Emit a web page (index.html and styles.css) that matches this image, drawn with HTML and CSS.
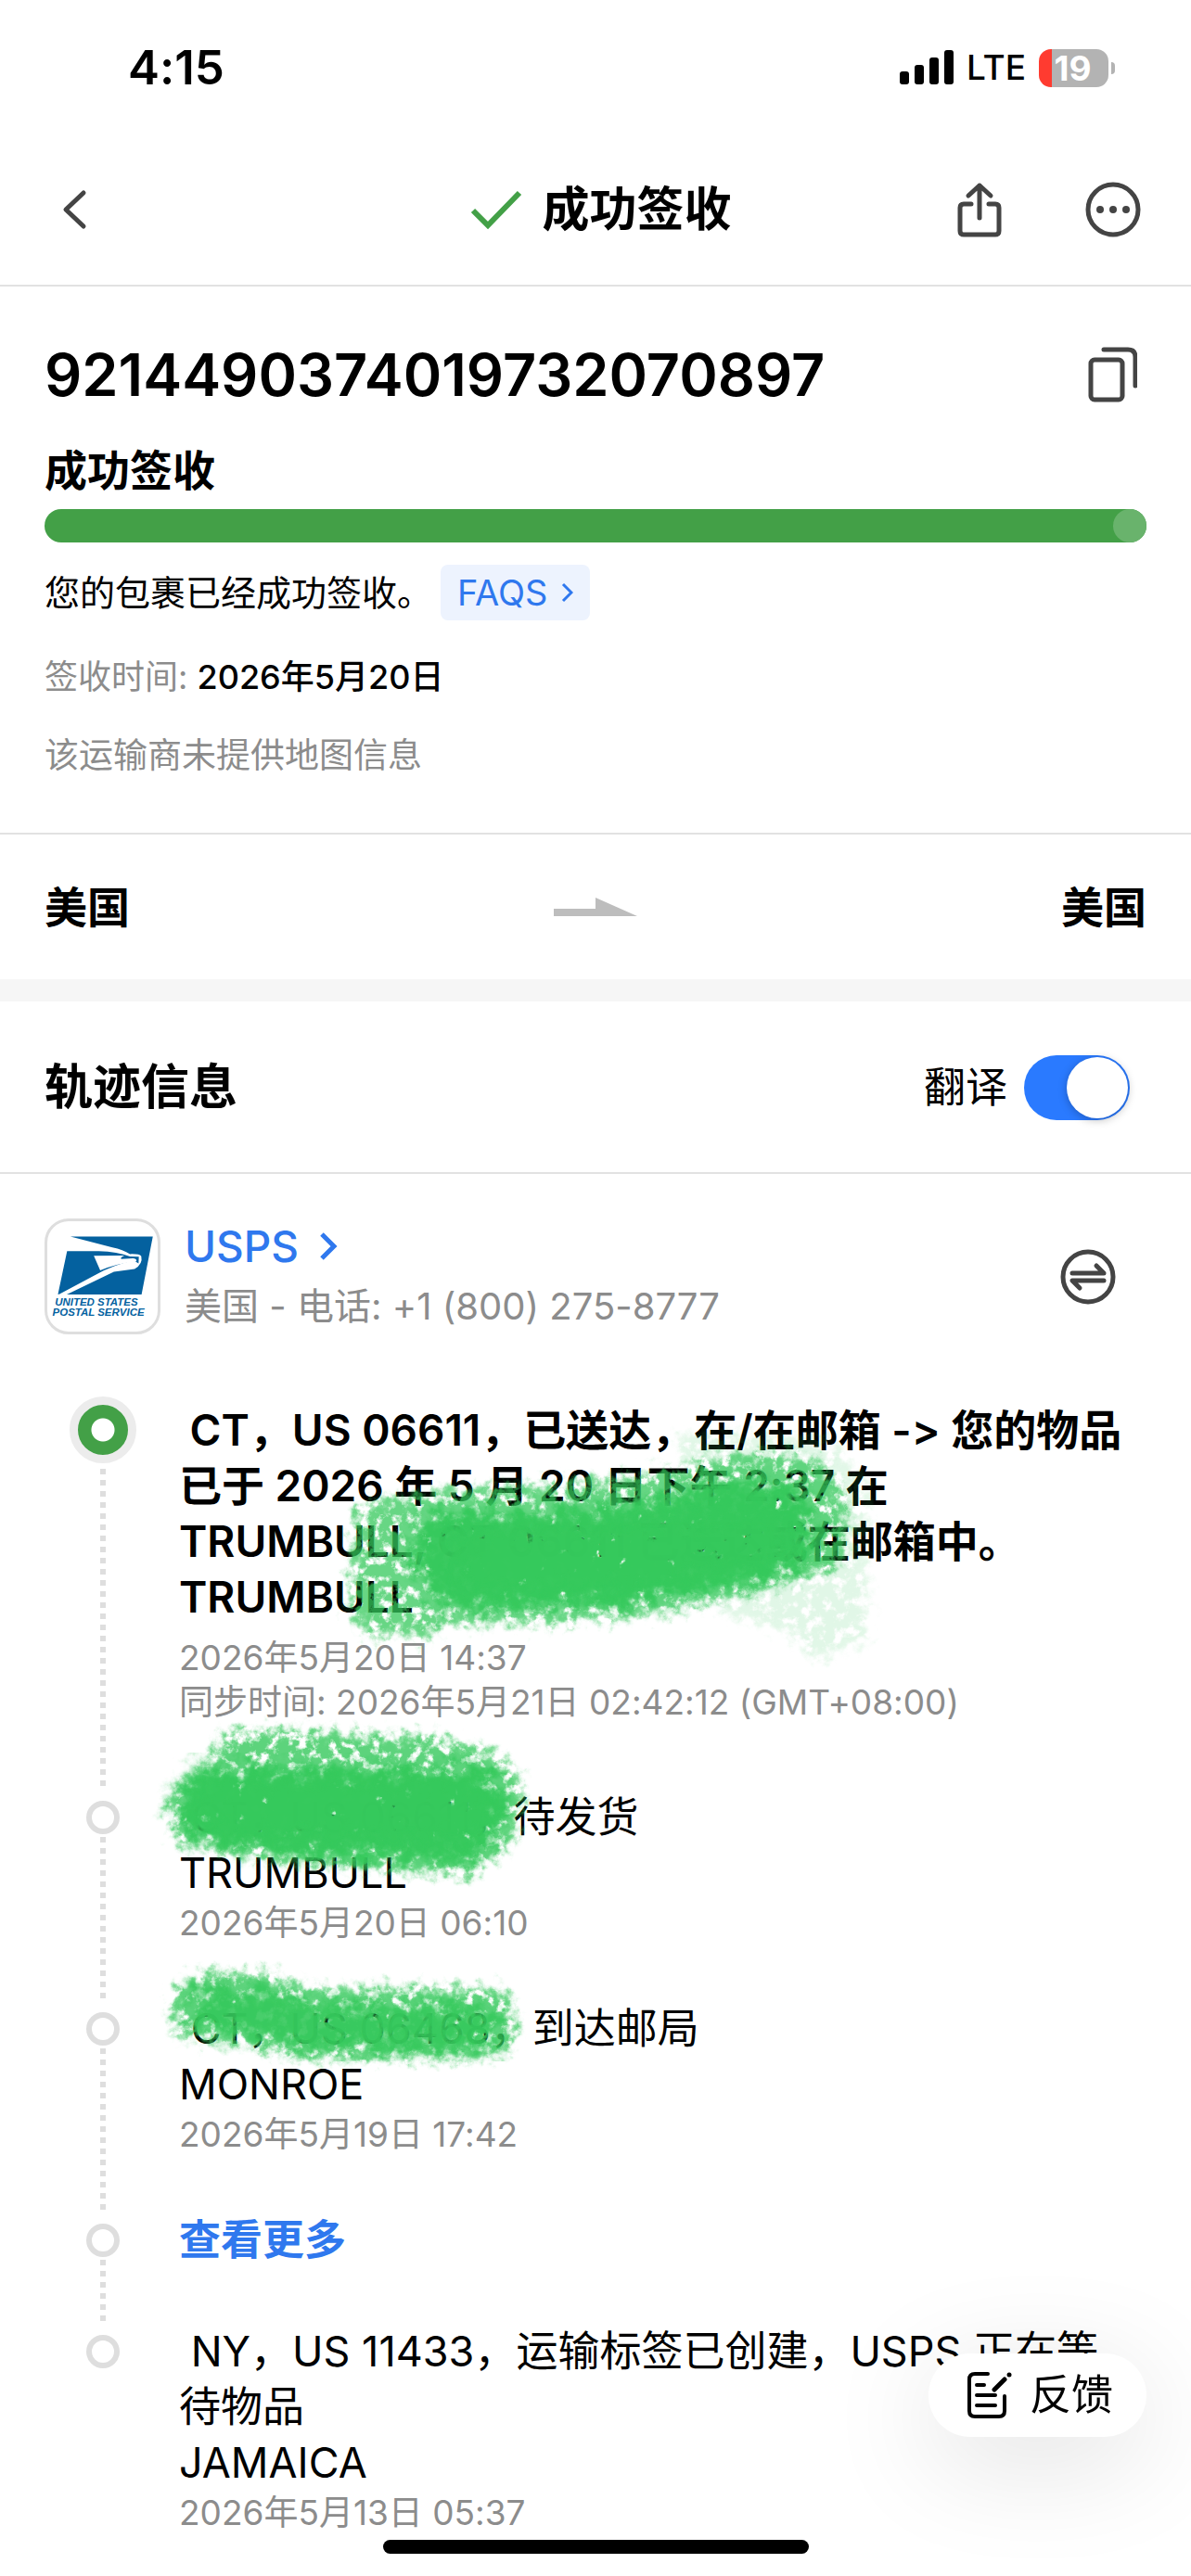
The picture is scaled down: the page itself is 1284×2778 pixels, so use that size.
FILE: index.html
```
<!DOCTYPE html>
<html lang="zh-CN">
<head>
<meta charset="utf-8">
<meta name="viewport" content="width=device-width, initial-scale=1">
<title>成功签收</title>
<link rel="stylesheet" href="styles.css">
</head>
<body>
<div class="status-bar">
  <span class="clock">4:15</span>
  <div class="status-icons">
    <svg class="signal" viewBox="0 0 58 38" aria-hidden="true"><rect x="0" y="23" width="10" height="14" rx="3"/><rect x="16" y="16" width="10" height="21" rx="3"/><rect x="32" y="8" width="10" height="29" rx="3"/><rect x="48" y="0" width="10" height="37" rx="3"/></svg>
    <span class="network">LTE</span>
    <div class="battery"><span class="battery-level">19</span></div>
  </div>
</div>

<header class="nav">
  <button class="icon-button" type="button" aria-label="返回"><svg width="28" height="44" viewBox="0 0 28 44"><path d="M24 4 5 22l19 18" class="line"/></svg></button>
  <h1 class="nav-title"><svg width="56" height="44" viewBox="0 0 56 44" aria-hidden="true"><path d="M3 23l16 16L53 4" fill="none" stroke="#43a047" stroke-width="6"/></svg>成功签收</h1>
  <div class="nav-actions">
    <button class="icon-button" type="button" aria-label="分享"><svg width="48" height="60" viewBox="0 0 48 60"><path d="M24 39V4M12 15 24 4l12 11M15 24H7q-4 0-4 4v25q0 4 4 4h34q4 0 4-4V28q0-4-4-4h-7" class="line"/></svg></button>
    <button class="icon-button" type="button" aria-label="更多"><svg width="60" height="60" viewBox="0 0 60 60"><circle cx="30" cy="30" r="27" class="line"/><circle cx="16" cy="30" r="4" fill="#444"/><circle cx="30" cy="30" r="4" fill="#444"/><circle cx="44" cy="30" r="4" fill="#444"/></svg></button>
  </div>
</header>

<main>
  <section class="summary">
    <div class="number-row">
      <span class="number">9214490374019732070897</span>
      <button class="icon-button" type="button" aria-label="复制"><svg width="54" height="60" viewBox="0 0 54 60"><rect x="4" y="14" width="34" height="43" rx="4" class="line"/><path d="M18 3h26q8 0 8 8v31" class="line"/></svg></button>
    </div>
    <h2 class="state">成功签收</h2>
    <div class="progress"><span class="progress-end"></span></div>
    <div class="message-row">
      <span class="message">您的包裹已经成功签收。</span>
      <a class="faq" href="#faq">FAQS<svg width="14" height="24" viewBox="0 0 14 24" aria-hidden="true"><path d="M3 3l9 9-9 9" fill="none" stroke="currentColor" stroke-width="3"/></svg></a>
    </div>
    <p class="detail signed-at">签收时间: <strong>2026年5月20日</strong></p>
    <p class="detail">该运输商未提供地图信息</p>
  </section>

  <section class="route">
    <span>美国</span>
    <svg width="90" height="20" viewBox="0 0 90 20" aria-hidden="true"><path d="M0 12h45V0l45 20H0z" fill="#bdbdbd"/></svg>
    <span>美国</span>
  </section>

  <section class="section-head">
    <h2 class="section-title">轨迹信息</h2>
    <label class="translate">翻译<input class="switch" type="checkbox" role="switch" checked></label>
  </section>

  <section class="tracking">
    <div class="carrier">
      <svg class="carrier-logo" viewBox="31 49 363 363" role="img" aria-label="USPS">
        <path fill="#04619f" d="M107 99H378L341 290H95L250 215 318 206Q346 190 340 164 334 156 303 157 280 142 245 135Z"/>
        <path fill="#04619f" d="M96 147H200Q262 149 303 165L332 166 331 188 315 178Q250 192 190 225L70 289H66Z"/>
        <path fill="#fff" d="M184 163L285 162Q270 168 274 173L313 171Q330 174 322 182 260 188 205 211Z"/>
        <text x="56" y="327" class="logo-text">UNITED STATES</text>
        <text x="48" y="360" class="logo-text">POSTAL SERVICE</text>
      </svg>
      <div class="carrier-info">
        <a class="carrier-name" href="#usps">USPS<svg width="20" height="32" viewBox="0 0 20 32" aria-hidden="true"><path d="M3 3l13 13L3 29" fill="none" stroke="currentColor" stroke-width="5"/></svg></a>
        <span class="carrier-phone">美国 - 电话: +1 (800) 275-8777</span>
      </div>
      <button class="icon-button" type="button" aria-label="切换"><svg width="60" height="60" viewBox="0 0 60 60"><circle cx="30" cy="30" r="27" class="line"/><path d="M13 26h34l-8-8M47 34H13l8 8" class="line"/></svg></button>
    </div>

    <ol class="events">
      <li class="event event-current">
        <div class="rail"><span class="node"></span></div>
        <div class="event-body">
          <p class="event-text">&nbsp;CT，US 06611，已送达，在/在邮箱 -&gt; 您的物品<br>已于 2026 年 5 月 20 日下午 2:37 在<br>TRUMBULL, CT 06611 已送达或在邮箱中。<br>TRUMBULL</p>
          <p class="event-time">2026年5月20日 14:37</p>
          <p class="event-time">同步时间: 2026年5月21日 02:42:12 (GMT+08:00)</p>
          <svg class="marker marker-a" viewBox="350 1540 600 260" aria-hidden="true">
            <defs>
              <filter id="chalk" x="-10%" y="-15%" width="120%" height="130%">
                <feTurbulence type="fractalNoise" baseFrequency="0.09" numOctaves="4" seed="8" result="n"/>
                <feGaussianBlur in="SourceGraphic" stdDeviation="5" result="s"/>
                <feDisplacementMap in="s" in2="n" scale="30" xChannelSelector="R" yChannelSelector="G" result="d"/>
                <feColorMatrix in="n" values="0 0 0 0 0  0 0 0 0 0  0 0 0 0 0  0 0 5 0 -1.5" result="m"/>
                <feComposite in="d" in2="m" operator="in"/>
              </filter>
              <filter id="dense" x="-10%" y="-15%" width="120%" height="130%">
                <feTurbulence type="fractalNoise" baseFrequency="0.06" numOctaves="4" seed="3" result="n"/>
                <feGaussianBlur in="SourceGraphic" stdDeviation="7" result="s"/>
                <feDisplacementMap in="s" in2="n" scale="44" xChannelSelector="G" yChannelSelector="R" result="d"/>
                <feColorMatrix in="n" values="0 0 0 0 0  0 0 0 0 0  0 0 0 0 0  0 0 8 0 -1.4" result="m"/>
                <feComposite in="d" in2="m" operator="in"/>
              </filter>
            </defs>
            <path filter="url(#chalk)" opacity=".75" d="M385 1628Q430 1604 600 1602 700 1592 760 1576 830 1562 880 1576L905 1600 915 1640 905 1690 800 1722 700 1742 600 1750 475 1752 458 1772 440 1758 405 1768 376 1740Q378 1690 385 1628Z"/>
            <path filter="url(#dense)" opacity=".96" d="M445 1640L480 1628 600 1630 700 1616 800 1594 860 1606 878 1640 870 1690 800 1710 680 1732 480 1738 450 1700Z"/>
            <path filter="url(#dense)" opacity=".8" d="M490 1650L700 1640 840 1630 850 1680 700 1715 500 1720Z"/>
            <path filter="url(#chalk)" opacity=".14" d="M730 1545L890 1550 935 1600 934 1770 880 1790 850 1760 780 1740Z"/>
          </svg>
        </div>
      </li>
      <li class="event">
        <div class="rail"><span class="node"></span></div>
        <div class="event-body">
          <p class="event-text">&nbsp;CT，US 06611，待发货<br>TRUMBULL</p>
          <p class="event-time">2026年5月20日 06:10</p>
          <svg class="marker marker-b" viewBox="150 1840 450 200" aria-hidden="true">
            <path filter="url(#chalk)" opacity=".8" d="M240 1868L300 1864 470 1872 530 1888 556 1908 566 1940 550 1985 512 2020 400 2014 300 2004 230 1992 186 1984 190 1965 178 1945 200 1912 228 1900Z"/>
            <path filter="url(#dense)" opacity=".96" d="M206 1904L520 1906 548 1940 530 1992 500 2008 300 1998 206 1980 186 1948Z"/>
            <path filter="url(#dense)" opacity=".8" d="M220 1915L520 1915 535 1945 515 1985 230 1980 200 1950Z"/>
          </svg>
        </div>
      </li>
      <li class="event">
        <div class="rail"><span class="node"></span></div>
        <div class="event-body">
          <p class="event-text">&nbsp;CT，US 06468，到达邮局<br>MONROE</p>
          <p class="event-time">2026年5月19日 17:42</p>
          <svg class="marker marker-c" viewBox="150 2100 450 140" aria-hidden="true">
            <path filter="url(#chalk)" opacity=".8" d="M215 2126L290 2126 330 2142 540 2142 552 2160 556 2186 546 2210 510 2218 320 2218 270 2204 194 2192 184 2170 190 2140Z"/>
            <path filter="url(#dense)" opacity=".9" d="M210 2142L285 2142 330 2158 530 2162 538 2208 330 2210 280 2194 206 2186Z"/>
          </svg>
        </div>
      </li>
      <li class="event">
        <div class="rail"><span class="node"></span></div>
        <div class="event-body"><a class="more" href="#more">查看更多</a></div>
      </li>
      <li class="event">
        <div class="rail rail-last"><span class="node"></span></div>
        <div class="event-body">
          <p class="event-text">&nbsp;NY，US 11433，运输标签已创建，USPS 正在等<br>待物品<br>JAMAICA</p>
          <p class="event-time">2026年5月13日 05:37</p>
        </div>
      </li>
    </ol>
  </section>
</main>

<button class="feedback" type="button"><svg width="48" height="52" viewBox="0 0 48 52" aria-hidden="true"><g fill="none" stroke="#000" stroke-width="4" stroke-linecap="round"><path d="M22 3H8Q2 3 2 9v34q0 6 6 6h26q6 0 6-6V27M10 15h8M10 26h20M10 37h20"/><path d="M29 20 40 9" stroke-width="5"/><path d="M45 4v0" stroke-width="5"/></g></svg>反馈</button>
<div class="home-indicator"></div>
</body>
</html>
```
FILE: styles.css
```
* { box-sizing: border-box; }

body {
  margin: 0;
  background: #fff;
  color: #000;
  font-family: Inter, "Noto Sans CJK SC", sans-serif;
  font-size: 45px;
  font-variant-ligatures: no-contextual;
  line-height: 60px;
}

h1, h2, p, ol { margin: 0; padding: 0; font-size: inherit; }
ol { list-style: none; }
a { text-decoration: none; }
svg { display: block; flex: none; }

button {
  border: 0;
  padding: 0;
  background: none;
  color: inherit;
  font: inherit;
}

.line {
  fill: none;
  stroke: #444;
  stroke-width: 5;
  stroke-linecap: round;
  stroke-linejoin: round;
}

.status-bar {
  display: flex;
  align-items: center;
  justify-content: space-between;
  height: 146px;
  padding: 0 82px 0 138px;
}
.clock { font-size: 51px; font-weight: 600; }
.status-icons { display: flex; align-items: center; gap: 14px; }
.signal { width: 58px; height: 38px; }
.network { font-size: 37px; font-weight: 500; }
.battery {
  position: relative;
  width: 75px;
  height: 41px;
  margin-right: 7px;
  border-radius: 13px;
  background: linear-gradient(90deg, #ff3b30 14px, #b3b3b3 14px);
}
.battery::after {
  content: "";
  position: absolute;
  right: -7px;
  top: 14px;
  width: 4px;
  height: 13px;
  border-radius: 0 4px 4px 0;
  background: #b3b3b3;
}
.battery-level {
  display: block;
  padding-right: 2px;
  color: #fff;
  font-size: 37px;
  font-weight: 700;
  line-height: 41px;
  text-align: center;
}

.nav {
  display: grid;
  grid-template-columns: 1fr auto 1fr;
  align-items: center;
  height: 163px;
  padding: 0 54px 2px 66px;
  border-bottom: 2px solid #e2e2e2;
}
.nav-title { display: flex; align-items: center; gap: 21px; font-size: 51px; font-weight: 600; }
.nav-actions { display: flex; align-items: center; justify-content: flex-end; gap: 90px; }

.summary { padding: 59px 48px; }
.number-row { display: flex; align-items: center; justify-content: space-between; padding-right: 10px; }
.number { font-size: 63px; font-weight: 600; line-height: 72px; }
.state { margin-top: 37px; font-size: 46px; font-weight: 600; }
.progress {
  display: flex;
  justify-content: flex-end;
  height: 36px;
  margin-top: 12px;
  border-radius: 18px;
  background: #43a047;
}
.progress-end { width: 36px; border-radius: 18px; background: #69b36c; }
.message-row { display: flex; align-items: center; gap: 9px; margin-top: 24px; }
.message { font-size: 38px; }
.faq {
  display: flex;
  align-items: center;
  gap: 14px;
  padding: 0 18px;
  border-radius: 8px;
  background: #edf3fe;
  color: #2f78ee;
  font-size: 38px;
}
.detail { margin-top: 37px; color: #8c8c8c; font-size: 37px; line-height: 48px; }
.signed-at { font-size: 36px; }
.detail strong { color: #000; font-weight: 500; }

.route {
  display: flex;
  align-items: center;
  justify-content: space-between;
  padding: 48px;
  border-top: 2px solid #e2e2e2;
  font-size: 46px;
  font-weight: 600;
}

.section-head {
  display: flex;
  align-items: center;
  justify-content: space-between;
  padding: 58px 66px 56px 48px;
  border-top: 24px solid #f6f6f6;
  border-bottom: 2px solid #e2e2e2;
}
.section-title { font-size: 52px; font-weight: 600; }
.translate { display: flex; align-items: center; gap: 18px; }
.switch {
  appearance: none;
  display: flex;
  align-items: center;
  justify-content: flex-end;
  width: 114px;
  height: 70px;
  margin: 0;
  padding: 2px;
  border-radius: 35px;
  background: #2a7aff;
}
.switch::before {
  content: "";
  width: 66px;
  height: 66px;
  border-radius: 33px;
  background: #fff;
  box-shadow: 0 2px 10px rgba(0, 0, 0, .25);
}

.tracking { padding: 48px 48px 42px; }
.carrier { display: flex; align-items: center; gap: 26px; padding-right: 33px; }
.carrier-logo {
  width: 125px;
  height: 125px;
  border: 3px solid #dedede;
  border-radius: 26px;
}
.logo-text { fill: #04619f; font: italic bold 35px "Liberation Sans", Arial, sans-serif; }
.carrier-info { display: flex; flex: 1; flex-direction: column; gap: 5px; }
.carrier-name { display: flex; align-items: center; gap: 22px; color: #2f78ee; font-size: 46px; font-weight: 500; }
.carrier-phone { color: #8c8c8c; font-size: 40px; }

.events { margin-top: 67px; }
.event { display: grid; grid-template-columns: 126px 1fr; column-gap: 19px; }
.event-body { position: relative; padding-bottom: 60px; white-space: nowrap; }
.event-time { color: #8c8c8c; font-size: 37px; line-height: 48px; }
.rail { display: flex; flex-direction: column; align-items: center; gap: 3px; padding: 12px 0 3px; }
.rail::after {
  content: "";
  flex: 1;
  width: 6px;
  background: repeating-linear-gradient(#dedede 0 6px, transparent 6px 12px);
}
.rail-last::after { content: none; }
.node { width: 36px; height: 36px; border: 6px solid #dedede; border-radius: 50%; }
.more { color: #2f78ee; font-weight: 600; }

.event-current .rail { gap: 6px; padding-top: 0; }
.event-current .node {
  width: 72px;
  height: 72px;
  border: 9px solid #ececec;
  background: radial-gradient(circle, #fff 12px, #43a047 13px);
}
.event-current .event-body { padding: 6px 0 70px; }
.event-current .event-text { margin-bottom: 12px; font-size: 46px; font-weight: 600; }

/* hand-drawn highlighter strokes laid over the text */
.marker { position: absolute; overflow: visible; fill: #34c95b; pointer-events: none; }
.marker-a { left: 157px; top: 34px; width: 600px; height: 260px; }
.marker-b { left: -43px; top: -88px; width: 450px; height: 200px; }
.marker-c { left: -43px; top: -56px; width: 450px; height: 140px; }

.feedback {
  position: fixed;
  right: 48px;
  bottom: 150px;
  display: flex;
  align-items: center;
  gap: 19px;
  padding: 15px 36px 15px 42px;
  border-radius: 45px;
  background: #fff;
  box-shadow: 0 24px 120px rgba(0, 0, 0, .13);
}
.home-indicator {
  position: fixed;
  left: 50%;
  bottom: 24px;
  width: 459px;
  height: 15px;
  margin-left: -229px;
  border-radius: 8px;
  background: #000;
}
```
